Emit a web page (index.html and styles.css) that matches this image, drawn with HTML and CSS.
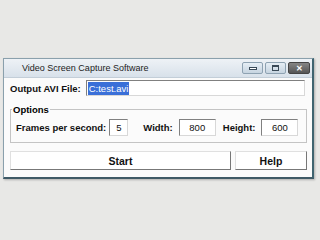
FILE: index.html
```html
<!DOCTYPE html>
<html lang="en">
<head>
  <meta charset="UTF-8" />
  <title>Video Screen Capture Software</title>
  <link rel="stylesheet" href="styles.css">
</head>
<body>
  <div class="window">
    <div class="titlebar">
      <span class="title">Video Screen Capture Software</span>
      <div class="controls">
        <span class="ctl"><span class="min"></span></span>
        <span class="ctl"><span class="max"></span></span>
        <span class="ctl close">✕</span>
      </div>
    </div>
    <div class="content">
      <div class="file-row">
        <span class="label">Output AVI File:</span>
        <div class="field wide"><span class="sel">C:test.avi</span></div>
      </div>
      <fieldset class="group">
        <legend>Options</legend>
        <div class="opt-row">
          <span class="label">Frames per second:</span>
          <div class="field num small">5</div>
          <span class="label gap">Width:</span>
          <div class="field num">800</div>
          <span class="label gap2">Height:</span>
          <div class="field num">600</div>
        </div>
      </fieldset>
      <div class="buttons">
        <button class="btn start">Start</button>
        <button class="btn help">Help</button>
      </div>
    </div>
  </div>
</body>
</html>
```

FILE: styles.css
```css
* { box-sizing: border-box; }
body {
  margin: 0;
  background: #e8e8e6;
  font-family: "Liberation Sans", Arial, sans-serif;
  width: 320px;
  height: 240px;
  overflow: hidden;
}

/* window frame */
.window {
  margin: 58px 0 0 3px;
  width: 311px;
  height: 121px;
  border: 1px solid #8aa0ac;
  border-right: 2px solid #3f6470;
  border-bottom: 2px solid #3f5a66;
  background: #fbfbfb;
  box-shadow: 1px 1px 2px rgba(0,0,0,0.25);
}
.titlebar {
  height: 19px;
  display: flex;
  align-items: center;
  justify-content: space-between;
  background: linear-gradient(#eef2f6, #d8e1ea);
  border-bottom: 1px solid #c3ced8;
}
.title {
  font-size: 9px;
  color: #222;
  padding-left: 18px;
  margin-top: -1px;
}
.controls { display: flex; gap: 2px; padding-right: 2px; }
.ctl {
  width: 21px;
  height: 12px;
  border: 1px solid #8ea2b2;
  border-radius: 2px;
  background: linear-gradient(#e6eef5, #c6d4e0);
  display: flex;
  align-items: center;
  justify-content: center;
}
.min { width: 8px; height: 3px; border: 1px solid #3a4a58; background: #fff; }
.max { width: 7px; height: 6px; border: 1px solid #3a4a58; border-top-width: 2px; }
.close {
  width: 22px;
  background: linear-gradient(#858585, #555);
  border-color: #444;
  color: #fff;
  font-size: 8px;
  font-weight: bold;
}

.content { padding: 2px 5px 0 6px; }
.label { font-size: 9.5px; font-weight: bold; color: #111; white-space: nowrap; }

.file-row { display: flex; align-items: center; gap: 5px; }
.field {
  height: 16px;
  background: #fff;
  border: 1px solid #808080;
  border-right-color: #d8d8d8;
  border-bottom-color: #d8d8d8;
  font-size: 9.5px;
  color: #111;
  display: flex;
  align-items: center;
}
.wide { flex: 1; margin-right: 2px; padding-left: 1px; }
.sel { background: #3a6fd8; color: #fff; padding: 0 1px; line-height: 13px; }

.group {
  margin: 8px 0 0 0;
  padding: 4px 4px 6px 5px;
  border: 1px solid #c4c4c4;
  min-width: 0;
}
.group legend {
  font-size: 9.5px;
  font-weight: bold;
  padding: 0 1px;
  margin-left: -4px;
}
.opt-row { display: flex; align-items: center; }
.num { width: 37px; height: 17px; justify-content: center; }
.small { width: 19px; margin-left: 3px; }
.gap { margin: 0 6px 0 15px; }
.gap2 { margin: 0 6px 0 7px; }

.buttons { display: flex; gap: 4px; margin-top: 8px; }
.btn {
  height: 19px;
  background: #fff;
  border: 1px solid #e0e0e0;
  border-right-color: #777;
  border-bottom-color: #777;
  font-family: "Liberation Sans", Arial, sans-serif;
  font-size: 10.5px;
  font-weight: bold;
  color: #111;
  padding: 0;
}
.start { width: 221px; }
.help { width: 72px; }
```
